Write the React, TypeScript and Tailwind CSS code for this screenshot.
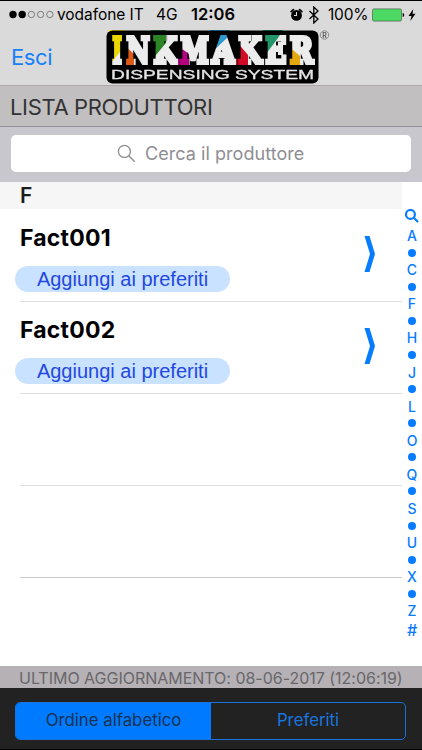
import { Fragment } from 'react';

const producers = ['Fact001', 'Fact002'];

const indexLetters = ['A', 'C', 'F', 'H', 'J', 'L', 'O', 'Q', 'S', 'U', 'X', 'Z'];

// x / width of each logo letter, and the coloured slice multiplied over it
const logoLetters = [
  { char: 'I', x: 5, w: 12, color: '#ffe800', slice: '3,0 18,0 18,17 5,33 3,36' },
  { char: 'N', x: 19, w: 26, color: '#f06018', slice: '18,15 28,24 28,36 18,36' },
  { char: 'K', x: 46, w: 26.5, color: '#2f9028', slice: '45,0 60,0 60,13 45,31' },
  { char: 'M', x: 73, w: 31, color: '#c4008a', slice: '72,16 83,24 83,36 72,36' },
  { char: 'A', x: 104.5, w: 26, color: '#2ea6e0', slice: '104,0 124,0 122,7 104,24' },
  { char: 'K', x: 131, w: 26, color: '#e40a2a', slice: '130,11 142,25 142,36 130,36' },
  { char: 'E', x: 158, w: 23.5, color: '#26a272', slice: '157,0 177,0 172,8 157,28' },
  { char: 'R', x: 182.5, w: 26, color: '#f8b510', slice: '181,15 194,26 194,36 181,36' },
];

const Logo = () => (
  <svg width="224" height="54" viewBox="0 0 224 54" className="isolate">
    <rect x="0.5" y="0.5" width="212" height="53" rx="6" fill="#000" />
    {logoLetters.map((l, i) => (
      <text
        key={i}
        x={l.x + 1.4}
        y="33"
        textLength={l.w - 2.8}
        lengthAdjust="spacingAndGlyphs"
        fontFamily="'DejaVu Serif', serif"
        fontWeight="700"
        fontSize="35.5"
        fill="#ececec"
        stroke="#ececec"
        strokeWidth="4.2"
      >
        {l.char}
      </text>
    ))}
    {logoLetters.map((l, i) => (
      <polygon key={i} points={l.slice} fill={l.color} className="mix-blend-multiply" />
    ))}
    <text x="5" y="48.5" textLength="203" lengthAdjust="spacingAndGlyphs" fontFamily="'Liberation Sans', sans-serif" fontSize="12.5" fill="#e4e4e4" stroke="#e4e4e4" strokeWidth="0.3">
      DISPENSING SYSTEM
    </text>
    <circle cx="218.5" cy="5" r="4.2" fill="none" stroke="#777" strokeWidth="0.8" />
    <text x="218.5" y="7.5" textAnchor="middle" fontFamily="Inter, sans-serif" fontWeight="600" fontSize="7" fill="#555">R</text>
  </svg>
);

const StatusBar = () => (
  <div className="flex h-[27px] items-center pl-[9px] pr-[6px] text-[15.5px] text-black">
    <svg width="45" height="9" viewBox="0 0 45 9" className="shrink-0">
      {[0, 1, 2, 3, 4].map(i => (
        <circle key={i} cx={4 + i * 9.2} cy="4.5" r={i < 2 ? 3.7 : 3.2} fill={i < 2 ? '#000' : 'none'} stroke="#555" strokeWidth={i < 2 ? 0 : 0.7} />
      ))}
    </svg>
    <span className="ml-[3px] w-[99px] whitespace-nowrap tracking-[-0.05px]">vodafone IT</span>
    <span className="w-[35px]">4G</span>
    <span className="whitespace-nowrap text-[16.5px] font-semibold">12:06</span>
    <div className="ml-auto flex items-center">
      <svg width="13" height="14" viewBox="0 0 13 14">
        <circle cx="6.5" cy="7.4" r="5.4" />
        <path d="M1.2 3.6 3.4 1.6M11.8 3.6 9.6 1.6" stroke="#000" strokeWidth="1.8" strokeLinecap="round" />
        <path d="M6.5 4v3.5H4" fill="none" stroke="#dadada" strokeWidth="1.1" />
      </svg>
      <svg width="12" height="18" viewBox="0 0 12 18" className="ml-[5px]">
        <path d="m1.5 5 8.5 8-4.2 4V1L10 5l-8.5 8" fill="none" stroke="#000" strokeWidth="1.3" />
      </svg>
      <span className="ml-[8px] w-[44px] whitespace-nowrap tracking-[-0.2px]">100%</span>
      <svg width="33" height="14" viewBox="0 0 33 14">
        <rect x="0.5" y="0.9" width="29" height="12.2" rx="1.5" fill="#4cd964" stroke="#49604d" strokeWidth="0.7" />
        <path d="M30.7 5c2 .5 2 3.5 0 4z" />
      </svg>
      <svg width="8" height="12" viewBox="0 0 8 12" className="ml-[3px]">
        <path d="M5.3 0 .5 7h3L2.3 12 7.5 4.7h-3z" />
      </svg>
    </div>
  </div>
);

const SearchGlyph = ({ className }: { className: string }) => (
  <svg viewBox="0 0 18 18" fill="none" stroke="currentColor" className={className}>
    <circle cx="7" cy="7" r="5.7" />
    <path d="m11.2 11.2 5.6 5.6" />
  </svg>
);

const App = () => (
  <div className="flex h-[750px] w-[422px] flex-col overflow-hidden bg-white font-[Inter,'Liberation_Sans',sans-serif]">
    <header className="h-[85px] shrink-0 border-t border-black bg-[#dadada]">
      <StatusBar />
      <div className="flex pl-[11px]">
        <button className="mt-[14px] h-[30px] w-[95px] text-left text-[22px] leading-[30px] tracking-[-0.4px] text-[#1780fb]">Esci</button>
        <div className="mt-[2px]"><Logo /></div>
      </div>
    </header>

    <h1 className="h-[42px] shrink-0 border-y border-t-[#aaa8aa] border-b-[#929094] bg-[#c2bfc0] pl-[10px] text-[22px] leading-[43px] tracking-[-0.35px] text-[#333]">
      LISTA PRODUTTORI
    </h1>

    <div className="h-[55px] shrink-0 bg-[#c8c7cd] px-[11px] pt-[8px]">
      <div className="flex h-[37px] items-center rounded-[5px] bg-white pl-[106px] text-[#8e8e93]">
        <SearchGlyph className="size-[19px] stroke-[1.3]" />
        <span className="ml-[9px] text-[18px] tracking-[0.05px]">Cerca il produttore</span>
      </div>
    </div>

    <main className="flex h-[484px] shrink-0">
      <div className="w-[402px]">
        <h2 className="mb-px h-[27px] bg-[#f6f6f6] pl-[20px] text-[21px] font-semibold leading-[28px] text-[#1c1c1c]">F</h2>
        {producers.map(name => (
          <div key={name} className="ml-[20px] flex h-[92px] justify-between border-b border-[#dedee2]">
            <div>
              <h3 className="mt-[13px] h-[30px] text-[23px] font-bold leading-[30px] tracking-[0.2px] text-black">{name}</h3>
              <button className="-ml-[5px] mt-[13px] flex h-[26px] w-[215px] items-center justify-center rounded-full bg-[#c9e2ff] font-['Liberation_Sans',Arial,sans-serif] text-[20px] text-[#2348e0]">
                Aggiungi ai preferiti
              </button>
            </div>
            <svg width="12" height="38" viewBox="0 0 12 38" className="mr-[26px] mt-[25px]">
              <path d="M.5 1h5L11 19 5.500 37h-5L6 19z" fill="#087cff" />
            </svg>
          </div>
        ))}
        <div className="ml-[20px] h-[92px] border-b border-[#dedee2]" />
        <div className="ml-[20px] h-[92px] border-b border-[#c8c8cc]" />
      </div>

      <nav className="flex w-[20px] flex-col items-center pt-[27px] text-[14px] font-medium text-[#087cff]">
        <SearchGlyph className="mb-[4px] size-[14px] shrink-0 stroke-[2.8]" />
        {indexLetters.map((letter, i) => (
          <Fragment key={letter}>
            {i > 0 && (
              <span className="flex h-[17.07px] shrink-0 items-center">
                <span className="size-[8px] rounded-full bg-[#087cff]" />
              </span>
            )}
            <span className="h-[17.07px] shrink-0 leading-[17px]">{letter}</span>
          </Fragment>
        ))}
        <span className="mt-[1px] text-[16px] leading-[20px]">#</span>
      </nav>
    </main>

    <p className="h-[22px] shrink-0 whitespace-nowrap bg-[#b5b1b5] pl-[19px] text-[16px] leading-[24px] tracking-[-0.02px] text-[#69676b]">
      ULTIMO AGGIORNAMENTO: 08-06-2017 (12:06:19)
    </p>

    <footer className="h-[62px] shrink-0 border-b border-black bg-[#222] px-[15px] pt-[14px]">
      <div className="flex h-[38px] w-[391px] overflow-hidden rounded-[5px] border border-[#1673df] text-[16.8px]">
        <button className="w-[195px] bg-[#007aff] text-[#18324f]">Ordine alfabetico</button>
        <button className="flex-1 text-[#1975df]">Preferiti</button>
      </div>
    </footer>
  </div>
);

export default App;
